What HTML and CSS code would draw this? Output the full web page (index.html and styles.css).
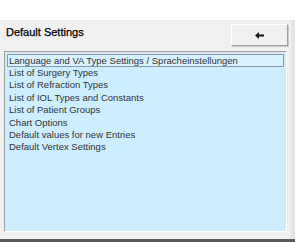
FILE: index.html
```html
<!DOCTYPE html>
<html lang="en">
<head>
    <meta charset="UTF-8">
    <title>Default Settings</title>
    <link rel="stylesheet" href="styles.css">
</head>
<body>

    <div class="topbar"></div>

    <div class="dialog">
        <div class="header">
            <h1>Default Settings</h1>
            <button class="back-btn" title="Back">
                <svg width="9" height="7" viewBox="0 0 9 7">
                    <path d="M0 3.5 L4 0 L4 2.5 L9 2.5 L9 4.5 L4 4.5 L4 7 Z" fill="#111"/>
                </svg>
            </button>
        </div>

        <ul class="settings-list">
            <li class="selected">Language and VA Type Settings / Spracheinstellungen</li>
            <li>List of Surgery Types</li>
            <li>List of Refraction Types</li>
            <li>List of IOL Types and Constants</li>
            <li>List of Patient Groups</li>
            <li>Chart Options</li>
            <li>Default values for new Entries</li>
            <li>Default Vertex Settings</li>
        </ul>
    </div>

    <div class="bottombar"></div>

</body>
</html>
```

FILE: styles.css
```css
/* General Styles */
body {
    margin: 0;
    width: 295px;
    height: 242px;
    overflow: hidden;
    background: #f0f0f0;
    font-family: 'Liberation Sans', Arial, sans-serif;
    color: #222;
}

.topbar {
    height: 20px;
    background: #ffffff;
}

.dialog {
    height: 219px;
    padding: 0 4px 0 4px;
    border-right: 4px solid #e4e4e4;
    box-sizing: border-box;
    width: 295px;
}

.header {
    display: flex;
    justify-content: space-between;
    align-items: flex-start;
    height: 31px;
    padding-top: 4px;
    box-sizing: border-box;
}

.header h1 {
    margin: 2px 0 0 2px;
    font-size: 11px;
    font-weight: normal;
    color: #000;
    -webkit-text-stroke: 0.25px #000;
}

.back-btn {
    width: 57px;
    height: 22px;
    margin-right: -1px;
    background: #f0f0f0;
    border: 1px solid;
    border-color: #ffffff #a0a0a0 #a0a0a0 #ffffff;
    box-shadow: 1px 1px 0 #c8c8c8;
    display: flex;
    align-items: center;
    justify-content: center;
    padding: 0;
}

.settings-list {
    list-style: none;
    margin: 0;
    padding: 2px 2px 0 2px;
    height: 181px;
    box-sizing: border-box;
    background: #cceeff;
    border: 1px solid;
    border-color: #a0a0a0 #ffffff #ffffff #a0a0a0;
    box-shadow: inset 1px 1px 0 #e0e0e0;
}

.settings-list li {
    font-size: 9.5px;
    line-height: 12.4px;
    padding-left: 2px;
    color: #333;
    white-space: nowrap;
}

.settings-list li.selected {
    background: #d8f2ff;
    border: 1px solid #8a9aa8;
    line-height: 11px;
    padding-left: 1px;
}

.bottombar {
    height: 3px;
    background: #5a5a5a;
}
```
